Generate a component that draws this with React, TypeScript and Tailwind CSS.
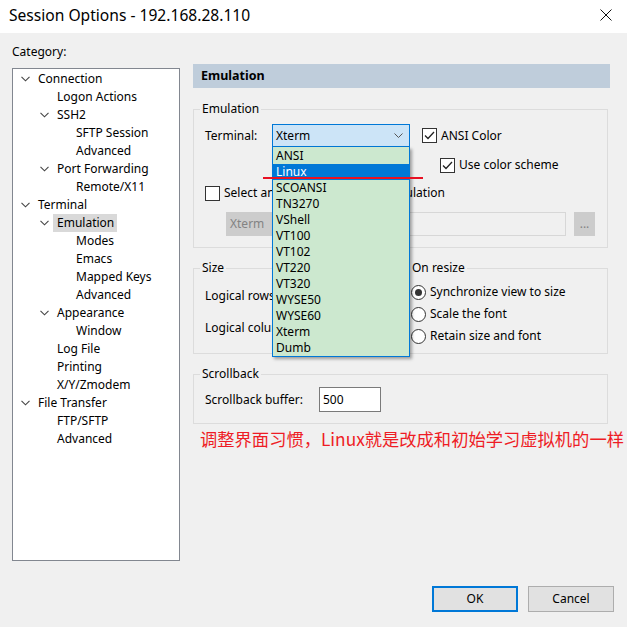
import React from 'react';

type TreeNode = { label: string; level: number; expanded?: boolean; selected?: boolean };

const tree: TreeNode[] = [
  { label: 'Connection', level: 0, expanded: true },
  { label: 'Logon Actions', level: 1 },
  { label: 'SSH2', level: 1, expanded: true },
  { label: 'SFTP Session', level: 2 },
  { label: 'Advanced', level: 2 },
  { label: 'Port Forwarding', level: 1, expanded: true },
  { label: 'Remote/X11', level: 2 },
  { label: 'Terminal', level: 0, expanded: true },
  { label: 'Emulation', level: 1, expanded: true, selected: true },
  { label: 'Modes', level: 2 },
  { label: 'Emacs', level: 2 },
  { label: 'Mapped Keys', level: 2 },
  { label: 'Advanced', level: 2 },
  { label: 'Appearance', level: 1, expanded: true },
  { label: 'Window', level: 2 },
  { label: 'Log File', level: 1 },
  { label: 'Printing', level: 1 },
  { label: 'X/Y/Zmodem', level: 1 },
  { label: 'File Transfer', level: 0, expanded: true },
  { label: 'FTP/SFTP', level: 1 },
  { label: 'Advanced', level: 1 },
];

const terminals = ['ANSI', 'Linux', 'SCOANSI', 'TN3270', 'VShell', 'VT100', 'VT102', 'VT220', 'VT320', 'WYSE50', 'WYSE60', 'Xterm', 'Dumb'];

const indent = ['pl-[6px]', 'pl-[25px]', 'pl-[44px]'];

const Chevron = () => (
  <svg width="9" height="6" viewBox="0 0 9 6">
    <path d="M0.5 0.8 L4.5 4.8 L8.5 0.8" fill="none" stroke="#444" strokeWidth="1.1" />
  </svg>
);

const Checkbox = ({ checked }: { checked?: boolean }) => (
  <span className="w-[15px] h-[15px] border border-[#333] bg-white flex items-center justify-center shrink-0">
    {checked && (
      <svg width="11" height="9" viewBox="0 0 11 9">
        <path d="M1 4.5 L4 7.5 L10 1" fill="none" stroke="#222" strokeWidth="1.3" />
      </svg>
    )}
  </span>
);

const Radio = ({ checked }: { checked?: boolean }) => (
  <span className="w-[15px] h-[15px] rounded-full border border-[#333] bg-white flex items-center justify-center shrink-0">
    {checked && <span className="w-[7px] h-[7px] rounded-full bg-[#333]" />}
  </span>
);

const GroupBox = ({ title, className, children }: { title: string; className?: string; children: React.ReactNode }) => (
  <fieldset className={`border border-[#dcdcdc] m-0 p-0 min-w-0 ${className ?? ''}`}>
    <legend className="ml-[6px] px-[2px] leading-[18px]">{title}</legend>
    {children}
  </fieldset>
);

const App: React.FC = () => {
  return (
    <div className="w-[627px] h-[627px] bg-[#f0f0f0] flex flex-col overflow-hidden text-[12px] text-black font-['Noto_Sans','Liberation_Sans',sans-serif]">
      {/* title bar */}
      <div className="h-[33px] bg-white flex items-center justify-between pl-[9px] pr-[15px] pb-[3px] shrink-0">
        <span className="text-[15.6px] leading-[20px]">Session Options - 192.168.28.110</span>
        <svg width="12" height="12" viewBox="0 0 12 12">
          <path d="M0.5 0.5 L11.5 11.5 M11.5 0.5 L0.5 11.5" stroke="#111" strokeWidth="1" />
        </svg>
      </div>

      <div className="flex pl-[12px] pt-[1px] shrink-0">
        {/* category tree */}
        <div className="w-[168px] flex flex-col">
          <div className="pt-[9px] leading-[18px]">Category:</div>
          <div className="mt-[7px] h-[493px] border border-[#828790] bg-white pt-[1px]">
            {tree.map((n, i) => (
              <div key={i} className={`h-[18px] flex items-center ${indent[n.level]}`}>
                <span className="w-[19px] pl-[2px] flex items-center shrink-0">{n.expanded && <Chevron />}</span>
                <span
                  className={`leading-[18px] whitespace-nowrap ${n.selected ? 'bg-[#d9d9d9] pl-[4px] pr-[3px] -ml-[4px]' : ''}`}
                >
                  {n.label}
                </span>
              </div>
            ))}
          </div>
        </div>

        {/* right panel */}
        <div className="ml-[13px] w-[417px] pt-[30px] flex flex-col">
          <div className="h-[24px] bg-[#bfcddb] pl-[8px] flex items-center font-bold text-[12.5px]">Emulation</div>

          <div className="w-[415px] flex flex-col">
            <GroupBox title="Emulation" className="mt-[12px] pb-[11px]">
              <div className="mt-[6px] h-[23px] flex items-center pl-[11px]">
                <span className="w-[67px]">Terminal:</span>
                <div className="relative w-[138px] h-[23px]">
                  <div className="h-full border border-[#0078d7] bg-[#cce4f7] flex items-center justify-between pl-[3px] pr-[6px]">
                    <span>Xterm</span>
                    <svg width="9" height="5" viewBox="0 0 9 5">
                      <path d="M0.5 0.5 L4.5 4.5 L8.5 0.5" fill="none" stroke="#555" strokeWidth="1" />
                    </svg>
                  </div>
                  <div className="absolute top-full left-0 w-full z-10 pt-[1px] bg-[#cce8cf] border-x border-b border-[#0078d7] shadow-[2px_2px_3px_rgba(0,0,0,0.35)]">
                    {terminals.map(t => (
                      <div
                        key={t}
                        className={`h-[16px] leading-[16px] px-[3px] ${t === 'Linux' ? 'bg-[#0078d7] text-white' : ''}`}
                      >
                        {t}
                      </div>
                    ))}
                  </div>
                  <div className="absolute left-[-9px] top-[53px] w-[160px] h-[2px] bg-[#e81123] z-20" />
                </div>
                <span className="ml-[12px]"><Checkbox checked /></span>
                <span className="ml-[4px]">ANSI Color</span>
              </div>

              <div className="mt-[9px] h-[18px] flex items-center pl-[246px]">
                <Checkbox checked />
                <span className="ml-[4px]">Use color scheme</span>
              </div>

              <div className="mt-[10px] h-[18px] flex items-center pl-[11px]">
                <Checkbox />
                <span className="ml-[4px]">Select an alternate keyboard emulation</span>
              </div>

              <div className="mt-[10px] h-[24px] flex items-stretch pl-[32px]">
                <div className="w-[110px] bg-[#cccccc] text-[#838383] flex items-center pl-[4px]">Xterm</div>
                <div className="ml-[4px] w-[226px] border border-[#d7d7d7] bg-[#f0f0f0]" />
                <div className="ml-[8px] w-[21px] bg-[#cccccc] text-[#838383] flex items-center justify-center">...</div>
              </div>
            </GroupBox>

            <div className="mt-[11px] flex gap-[5px]">
              <GroupBox title="Size" className="w-[205px] pb-[13px]">
                <div className="mt-[7px] h-[23px] flex items-center pl-[11px]">
                  <span className="w-[100px]">Logical rows:</span>
                  <div className="w-[60px] h-[23px] border border-[#7a7a7a] bg-white" />
                </div>
                <div className="mt-[9px] h-[23px] flex items-center pl-[11px]">
                  <span className="w-[100px]">Logical columns:</span>
                  <div className="w-[60px] h-[23px] border border-[#7a7a7a] bg-white" />
                </div>
              </GroupBox>
              <GroupBox title="On resize" className="flex-1 pb-[6px]">
                <div className="mt-[4px] pl-[7px] flex flex-col">
                  {['Synchronize view to size', 'Scale the font', 'Retain size and font'].map((r, i) => (
                    <div key={r} className="h-[22px] flex items-center">
                      <Radio checked={i === 0} />
                      <span className="ml-[4px]">{r}</span>
                    </div>
                  ))}
                </div>
              </GroupBox>
            </div>

            <GroupBox title="Scrollback" className="mt-[11px] pb-[11px]">
              <div className="mt-[4px] h-[25px] flex items-center pl-[11px]">
                <span className="w-[114px]">Scrollback buffer:</span>
                <div className="w-[62px] h-[25px] border border-[#7a7a7a] bg-white flex items-center pl-[3px]">500</div>
              </div>
            </GroupBox>
          </div>

          <div className="mt-[5px] pl-[7px] whitespace-nowrap leading-[20px] text-[17.3px] text-[#ee1c25] font-['Noto_Sans_CJK_SC',sans-serif]">
            调整界面习惯，Linux就是改成和初始学习虚拟机的一样
          </div>
        </div>
      </div>

      <div className="flex-1" />
      <div className="flex justify-end gap-[10px] pr-[13px] pb-[15px]">
        <button className="w-[86px] h-[26px] border-2 border-[#0078d7] bg-[#e1e1e1]">OK</button>
        <button className="w-[86px] h-[26px] border border-[#adadad] bg-[#e1e1e1]">Cancel</button>
      </div>
    </div>
  );
};

export default App;
